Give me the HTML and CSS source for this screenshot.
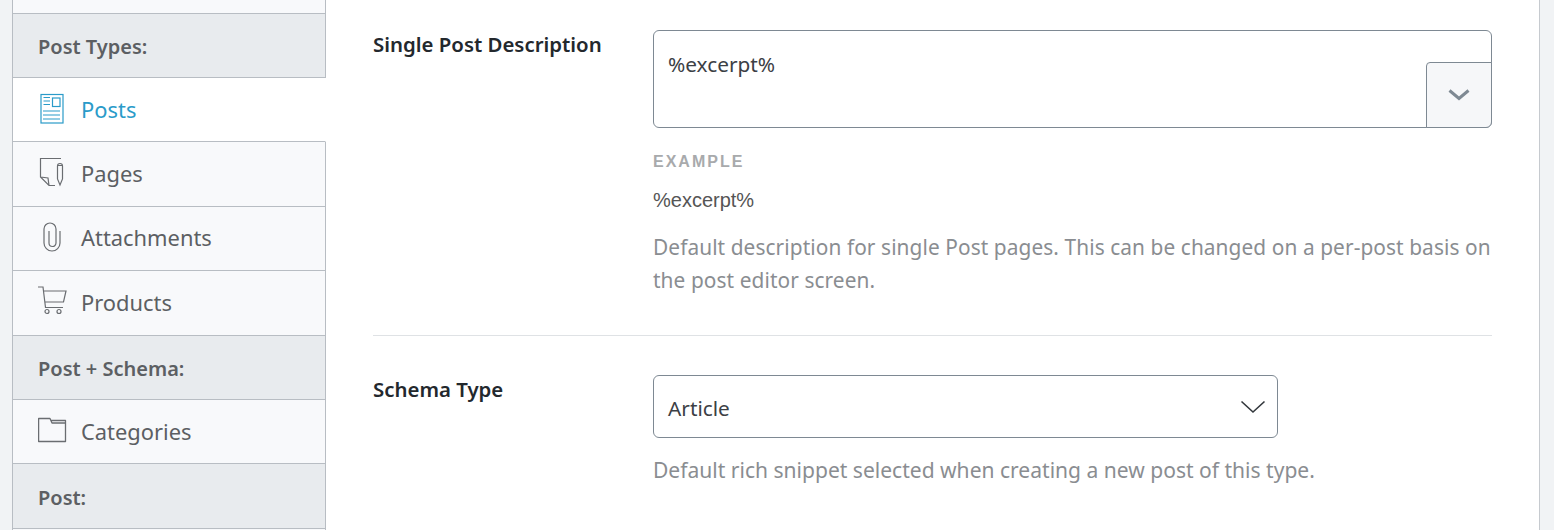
FILE: index.html
```html
<!DOCTYPE html>
<html lang="en">
<head>
<meta charset="utf-8">
<title>Search Appearance</title>
<link rel="stylesheet" href="styles.css">
</head>
<body>
<div class="page">
  <nav class="side">
    <div class="stub"></div>
    <div class="head">Post Types:</div>
    <a class="item active">
      <svg class="ico" width="30" height="34" viewBox="0 -17 30 34" fill="none" stroke="currentColor" stroke-width="1.2"><rect x="3" y="-14.5" width="22" height="28.5"/><path d="M5.500 -11.500H12M5.500 -8H12M5.500 -4.500H12M5 2H22M5 6H22M5 10H22"/><rect x="14.500" y="-11" width="7.500" height="8.500"/></svg>
      <span>Posts</span>
    </a>
    <a class="item">
      <svg class="ico" width="30" height="34" viewBox="0 -17 30 34" fill="none" stroke="currentColor" stroke-width="1.2"><path d="M23 -15.500H2.500V3L11 11.500H17M2.500 3L10 4L11 11.500"/><path d="M19.500 -8a2.500 2.500 0 0 1 5 0V5L22 11L19.500 5ZM19.500 -8.500H24.500"/></svg>
      <span>Pages</span>
    </a>
    <a class="item">
      <svg class="ico" width="30" height="34" viewBox="0 -17 30 34" fill="none" stroke="currentColor" stroke-width="1.2"><path d="M11 -7V5a3.500 3.500 0 0 0 7 0V-9a6 6 0 0 0-12 0V5a8 8 0 0 0 16 0V-7"/></svg>
      <span>Attachments</span>
    </a>
    <a class="item">
      <svg class="ico" width="30" height="34" viewBox="0 -17 30 34" fill="none" stroke="currentColor" stroke-width="1.2"><path d="M0 -15H5L7.500 5.500H25M5.600 -11H28L25.500 0H7"/><circle cx="9" cy="9.500" r="2"/><circle cx="21" cy="9.500" r="2"/></svg>
      <span>Products</span>
    </a>
    <div class="head">Post + Schema:</div>
    <a class="item">
      <svg class="ico" width="30" height="34" viewBox="0 -17 30 34" fill="none" stroke="currentColor" stroke-width="1.300" stroke-linejoin="round"><path d="M.600 -12.500H12L14 -8H27.500V10.500H.600ZM13 -10.500H27.500V-8"/></svg>
      <span>Categories</span>
    </a>
    <div class="head">Post:</div>
    <div class="stub"></div>
  </nav>
  <main class="main">
    <section class="field first">
      <label class="label">Single Post Description</label>
      <div class="control">
        <div class="textarea">
          <span class="value">%excerpt%</span>
          <button class="more"><svg width="22" height="12" viewBox="0 0 22 12" fill="none" stroke="#7e8993" stroke-width="3"><path d="M1.500 1.500 11 9.500l9.500-8"/></svg></button>
        </div>
        <div class="eyebrow">EXAMPLE</div>
        <div class="sample">%excerpt%</div>
        <p class="help">Default description for single Post pages. This can be changed on a per-post basis on the post editor screen.</p>
      </div>
    </section>
    <section class="field second">
      <label class="label">Schema Type</label>
      <div class="control">
        <div class="select">
          <span class="value">Article</span>
          <svg width="26" height="14" viewBox="0 0 26 14" fill="none" stroke="#32373c" stroke-width="1.600"><path d="M1.500 1.500 13 12 24.500 1.500"/></svg>
        </div>
        <p class="help tight">Default rich snippet selected when creating a new post of this type.</p>
      </div>
    </section>
  </main>
</div>
</body>
</html>
```
FILE: styles.css
```css
* { box-sizing: border-box; }
html, body { margin: 0; height: 530px; overflow: hidden; }
body {
  background: #f1f3f5;
  font-family: "Noto Sans", "Open Sans", sans-serif;
  color: #5c5f63;
}
.page { display: flex; height: 530px; padding-left: 12px; }
.side {
  width: 314px;
  flex: none;
  display: flex;
  flex-direction: column;
  border-left: 1px solid #b8bdc3;
}
.stub { height: 13.600px; background: #f8f9fb; border-bottom: 1px solid #b8bdc3; border-right: 1px solid #b8bdc3; flex: none; }
.side .stub:last-child { height: 20px; border-bottom: 0; }
.head {
  flex: none;
  height: 64.400px;
  padding: 3px 0 0 25px;
  display: flex;
  align-items: center;
  background: #e8ebee;
  border-bottom: 1px solid #b8bdc3;
  border-right: 1px solid #b8bdc3;
  font-size: 20px;
  font-weight: 600;
  color: #5c5f63;
}
.item {
  flex: none;
  height: 64.400px;
  padding: 0 0 1px 25px;
  display: flex;
  align-items: center;
  background: #f8f9fb;
  border-bottom: 1px solid #b8bdc3;
  border-right: 1px solid #b8bdc3;
  font-size: 21.900px;
  color: #5c5f63;
}
.ico { flex: none; margin-right: 13px; color: #6a6d71; }
.active { background: #fff; border-right-color: #fff; color: #2a9bc9; }
.active .ico { color: #2a9bc9; }
.main {
  width: 1214px;
  flex: none;
  background: #fff;
  border-right: 1px solid #c6cacf;
  padding: 30px 47px 0 47px;
}
.field { display: flex; }
.first { padding-bottom: 38px; border-bottom: 1px solid #dfe2e5; }
.second { padding-top: 39px; }
.label {
  width: 280px;
  flex: none;
  font-size: 20.400px;
  font-weight: 600;
  color: #23282d;
  line-height: 28px;
}
.control { flex: 1; min-width: 0; }
.textarea {
  position: relative;
  height: 98px;
  border: 1px solid #7e8993;
  border-radius: 6px;
  padding: 18px 14px;
  background: #fff;
}
.value { font-size: 20.800px; line-height: 34px; color: #3c4045; display: block; margin-top: -2px; }
.select .value { margin-top: 2px; }
.more {
  position: absolute;
  right: -1px;
  bottom: -1px;
  width: 66px;
  height: 66px;
  border: 1px solid #7e8993;
  border-radius: 4px 0 6px 0;
  background: #f6f7f9;
  display: flex;
  align-items: center;
  justify-content: center;
  padding: 0;
}
.eyebrow {
  margin-top: 25px;
  font-family: "Liberation Sans", Arial, sans-serif;
  font-size: 16px;
  font-weight: 700;
  letter-spacing: 2px;
  line-height: 18px;
  color: #a8aaac;
}
.sample {
  margin-top: 17px;
  font-family: "Liberation Sans", Arial, sans-serif;
  font-size: 20px;
  line-height: 24px;
  color: #555;
}
.help {
  margin: 19px 0 0;
  font-size: 20.850px;
  letter-spacing: 0.085px;
  line-height: 33px;
  color: #8a8d91;
}
.tight { margin-top: 15px; font-size: 21.050px; letter-spacing: 0; }
.select {
  width: 625px;
  height: 63px;
  border: 1px solid #7e8993;
  border-radius: 6px;
  padding: 0 11px 0 14px;
  display: flex;
  align-items: center;
  justify-content: space-between;
}
```
